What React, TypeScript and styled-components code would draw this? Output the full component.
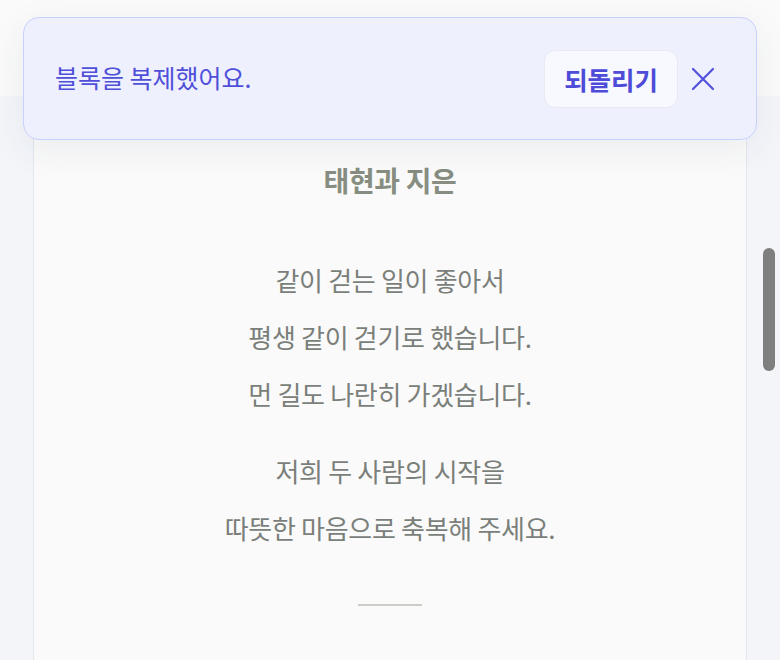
import styled, { createGlobalStyle } from 'styled-components'

const GlobalStyle = createGlobalStyle`
  html, body {
    margin: 0;
    padding: 0;
    background: #f3f5f9;
    font-family: "Noto Sans CJK KR", "Noto Sans", sans-serif;
  }
`

const Page = styled.div`
  position: relative;
  height: 660px;
  overflow: hidden;
`

const TopBar = styled.div`
  height: 96px;
  background: #fafafa;
`

const Card = styled.main`
  margin: 0 33px;
  min-height: 600px;
  background: #fafafa;
  border-left: 1px solid #e2e6ee;
  border-right: 1px solid #e2e6ee;
  padding-top: 64px;
  display: flex;
  flex-direction: column;
  align-items: center;
`

const Title = styled.h1`
  margin: 0;
  font-size: 28px;
  line-height: 40px;
  font-weight: 700;
  letter-spacing: -0.4px;
  color: #878e81;
`

const Verse = styled.div`
  margin-top: 51px;
  display: flex;
  flex-direction: column;
  gap: 20px;
`

const Stanza = styled.p`
  margin: 0;
  text-align: center;
  font-size: 26px;
  line-height: 57px;
  letter-spacing: -0.3px;
  color: #7b7f7a;
`

const Divider = styled.hr`
  margin: 48px 0 0;
  width: 64px;
  height: 2px;
  border: 0;
  background: #c9cec6;
`

const Toast = styled.div`
  position: absolute;
  top: 17px;
  left: 23px;
  right: 23px;
  height: 123px;
  box-sizing: border-box;
  display: flex;
  align-items: center;
  padding: 0 33px 0 31px;
  background: #eef0fd;
  border: 1.5px solid #c8d1fc;
  border-radius: 16px;
  box-shadow: 0 10px 36px rgba(40, 50, 80, 0.07);
`

const ToastText = styled.span`
  flex: 1;
  margin-top: -3px;
  font-size: 25px;
  letter-spacing: 0;
  color: #4f4fd9;
`

const UndoButton = styled.button`
  height: 58px;
  padding: 0 19px;
  border: 1px solid #e7e9f5;
  border-radius: 11px;
  background: #f8f9fe;
  font-family: inherit;
  font-size: 25.5px;
  font-weight: 700;
  letter-spacing: 0;
  color: #4d4bd8;
  cursor: pointer;
`

const CloseButton = styled.button`
  width: 40px;
  height: 40px;
  margin-left: 5px;
  display: flex;
  align-items: center;
  justify-content: center;
  border: 0;
  padding: 0;
  background: transparent;
  color: #5250dc;
  cursor: pointer;
`

const ScrollThumb = styled.div`
  position: absolute;
  top: 248px;
  left: 763px;
  width: 12px;
  height: 123px;
  border-radius: 6px;
  background: #7f7f7f;
`

const stanzas = [
  ['같이 걷는 일이 좋아서', '평생 같이 걷기로 했습니다.', '먼 길도 나란히 가겠습니다.'],
  ['저희 두 사람의 시작을', '따뜻한 마음으로 축복해 주세요.'],
]

export default function App() {
  return (
    <>
      <GlobalStyle />
      <Page>
        <TopBar />
        <Card>
          <Title>태현과 지은</Title>
          <Verse>
            {stanzas.map((lines, i) => (
              <Stanza key={i}>
                {lines.map((line, j) => (
                  <span key={j}>
                    {line}
                    {j < lines.length - 1 && <br />}
                  </span>
                ))}
              </Stanza>
            ))}
          </Verse>
          <Divider />
        </Card>

        <Toast>
          <ToastText>블록을 복제했어요.</ToastText>
          <UndoButton>되돌리기</UndoButton>
          <CloseButton aria-label="닫기">
            <svg width="24" height="24" viewBox="0 0 24 24" fill="none" stroke="currentColor" strokeWidth="2.2" strokeLinecap="round">
              <path d="M2 2 L22 22 M22 2 L2 22" />
            </svg>
          </CloseButton>
        </Toast>

        <ScrollThumb />
      </Page>
    </>
  )
}
